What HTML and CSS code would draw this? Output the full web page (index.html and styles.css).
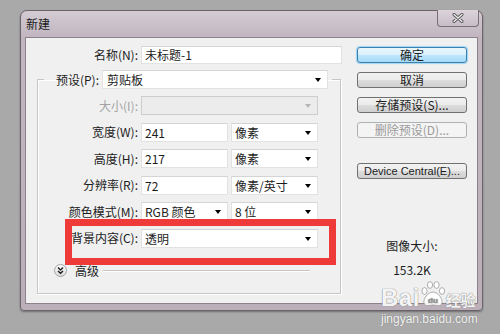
FILE: index.html
```html
<!DOCTYPE html>
<html lang="zh-CN">
<head>
    <meta charset="UTF-8">
    <meta name="viewport" content="width=device-width, initial-scale=1.0">
    <title>新建</title>
    <link rel="stylesheet" href="styles.css">
</head>
<body>
    <div class="dialog">
        <div class="titlebar">
            <span class="title">新建</span>
            <span class="close-btn">
                <svg width="12" height="10" viewBox="0 0 12 10">
                    <path d="M2 1.5 L10 8.5 M10 1.5 L2 8.5" stroke="#555" stroke-width="3" stroke-linecap="round"/>
                    <path d="M2 1.5 L10 8.5 M10 1.5 L2 8.5" stroke="#f4f4f4" stroke-width="1.2" stroke-linecap="round"/>
                </svg>
            </span>
        </div>

        <div class="client">
            <div class="main">
                <div class="row">
                    <label class="lbl lbl-name">名称(N):</label>
                    <div class="field w-name">未标题-1</div>
                </div>

                <fieldset class="group">
                    <legend class="preset">
                        <span class="preset-inner">
                            <span class="lbl-preset">预设(P):</span>
                            <span class="field select w-preset">剪贴板<i class="arrow"></i></span>
                        </span>
                    </legend>

                    <div class="rows">
                        <div class="row">
                            <label class="lbl disabled">大小(I):</label>
                            <div class="field select w-wide is-disabled"><i class="arrow"></i></div>
                        </div>
                        <div class="row">
                            <label class="lbl">宽度(W):</label>
                            <div class="field w-num">241</div>
                            <div class="field select w-unit">像素<i class="arrow"></i></div>
                        </div>
                        <div class="row">
                            <label class="lbl">高度(H):</label>
                            <div class="field w-num">217</div>
                            <div class="field select w-unit">像素<i class="arrow"></i></div>
                        </div>
                        <div class="row">
                            <label class="lbl">分辨率(R):</label>
                            <div class="field w-num">72</div>
                            <div class="field select w-unit">像素/英寸<i class="arrow"></i></div>
                        </div>
                        <div class="row">
                            <label class="lbl">颜色模式(M):</label>
                            <div class="field select w-num">RGB 颜色<i class="arrow"></i></div>
                            <div class="field select w-unit">8 位<i class="arrow"></i></div>
                        </div>
                        <div class="row">
                            <label class="lbl">背景内容(C):</label>
                            <div class="field select w-wide">透明<i class="arrow"></i></div>
                        </div>
                    </div>

                    <div class="advanced">
                        <span class="expander">
                            <svg width="13" height="13" viewBox="0 0 13 13">
                                <defs>
                                    <linearGradient id="exp" x1="0" y1="0" x2="0" y2="1">
                                        <stop offset="0" stop-color="#ffffff"/>
                                        <stop offset="1" stop-color="#d9d9d9"/>
                                    </linearGradient>
                                </defs>
                                <circle cx="6.5" cy="6.5" r="6" fill="url(#exp)" stroke="#a3a3a3"/>
                                <path d="M4 3.6 L6.5 6 L9 3.6 M4 6.9 L6.5 9.3 L9 6.9" fill="none" stroke="#222" stroke-width="1.4"/>
                            </svg>
                        </span>
                        <span>高级</span>
                        <span class="rule"></span>
                    </div>
                </fieldset>
            </div>

            <div class="side">
                <button class="btn btn-default">确定</button>
                <button class="btn">取消</button>
                <button class="btn">存储预设(S)...</button>
                <button class="btn" disabled>删除预设(D)...</button>
                <button class="btn btn-gap btn-latin">Device Central(E)...</button>
                <div class="image-size">
                    <div>图像大小:</div>
                    <div class="size-value">153.2K</div>
                </div>
            </div>

            <!-- annotation drawn over the screenshot -->
            <div class="highlight"></div>
        </div>
    </div>

    <div class="watermark">
        <div class="wm-logo">
            <span class="wm-bai">Bai</span>
            <svg class="wm-paw" width="26" height="28" viewBox="0 0 26 28">
                <g fill="rgba(255,255,255,0.9)" stroke="#9a9a9a" stroke-width="0.8">
                    <ellipse cx="4.5" cy="11" rx="2.6" ry="3.4"/>
                    <ellipse cx="10" cy="5" rx="2.6" ry="3.4"/>
                    <ellipse cx="16.5" cy="5" rx="2.6" ry="3.4"/>
                    <ellipse cx="22" cy="11" rx="2.6" ry="3.4"/>
                    <path d="M13 12 C18 12 23 19 22 23 C21 27 16 25 13 25 C10 25 5 27 4 23 C3 19 8 12 13 12 Z"/>
                </g>
                <text x="13" y="23" text-anchor="middle" class="wm-du">du</text>
            </svg>
            <span class="wm-jy">经验</span>
        </div>
        <div class="wm-url">jingyan.baidu.com</div>
    </div>
</body>
</html>
```

FILE: styles.css
```css
body {
    margin: 0;
    background-color: #a9a9a9;
    font-family: "Noto Sans CJK SC", "Liberation Sans", sans-serif;
    font-size: 12px;
    line-height: 16px;
    color: #1c1c1c;
    position: relative;
    height: 334px;
    overflow: hidden;
}
.dialog {
    margin: 10px 0 0 20px;
    width: 463px;
    height: 301px;
    box-sizing: border-box;
    border: 1px solid #6c626b;
    border-radius: 7px 7px 4px 4px;
    background: linear-gradient(#d4cbd3, #c1b6c0 26px, #bbb0ba);
    padding: 0 4px 6px;
    display: flex;
    flex-direction: column;
    box-shadow: 0 1px 2px rgba(0, 0, 0, 0.35);
}
.titlebar {
    height: 26px;
    display: flex;
    align-items: center;
}
.title {
    padding-left: 1px;
    font-size: 12px;
    color: #1a1a1a;
}
.close-btn {
    margin-left: auto;
    margin-right: -1px;
    margin-top: -1px;
    align-self: flex-start;
    width: 42px;
    height: 17px;
    box-sizing: border-box;
    border: 1px solid #7a6f79;
    border-top: none;
    border-radius: 0 0 4px 4px;
    background: linear-gradient(#dcd3db, #c8bdc7);
    display: flex;
    align-items: center;
    justify-content: center;
}
.client {
    flex: 1;
    position: relative;
    background-color: #f0f0f0;
    border: 1px solid #8d828c;
    display: flex;
    padding: 8px 0 0 11px;
}
.main {
    width: 305px;
}
.row {
    display: flex;
    align-items: center;
    gap: 3px;
}
.lbl {
    width: 100px;
    text-align: right;
    white-space: nowrap;
}
.lbl-name {
    width: 101px;
}
.disabled {
    color: #a3a3a3;
}
.field {
    position: relative;
    height: 19px;
    box-sizing: border-box;
    line-height: 17px;
    padding-left: 3px;
    background-color: #fff;
    border: 1px solid #e2e2e2;
    border-top-color: #d4d4d4;
    white-space: nowrap;
}
.w-name { width: 201px; height: 18px; line-height: 16px; }
.w-preset { width: 226px; padding-left: 4px; }
.w-wide { width: 177px; }
.w-num { width: 87px; }
.w-unit { width: 87px; }
.is-disabled {
    background-color: #ececec;
    border-color: #cdcdcd;
}
.arrow {
    position: absolute;
    right: 6px;
    top: 7px;
    width: 0;
    height: 0;
    border-left: 3.5px solid transparent;
    border-right: 3.5px solid transparent;
    border-top: 4px solid #000;
}
.is-disabled .arrow {
    border-top-color: #b5b5b5;
}
.group {
    margin: 6px 0 0;
    padding: 0 0 15px;
    width: 304px;
    box-sizing: border-box;
    border: 1px solid #c6c6c6;
    box-shadow: inset 1px 1px 0 #fff, 1px 1px 0 #fff;
}
.preset {
    margin-left: 6px;
    padding: 0 4px 0 10px;
}
.preset-inner {
    display: flex;
    align-items: center;
    gap: 3px;
}
.lbl-preset {
    width: 45px;
    text-align: right;
    white-space: nowrap;
}
.rows {
    padding-top: 7px;
    display: grid;
    row-gap: 7.5px;
}
.advanced {
    margin-top: 16px;
    height: 14px;
    display: flex;
    align-items: center;
    padding-left: 16px;
}
.expander {
    display: flex;
    margin-right: 8px;
}
.rule {
    flex: 1;
    margin: 1px 30px 0 4px;
    border-top: 1px solid #c6c6c6;
    border-bottom: 1px solid #fff;
}
.side {
    width: 110px;
    margin-left: 15px;
    padding-top: 1px;
    display: flex;
    flex-direction: column;
}
.btn {
    height: 16px;
    margin-bottom: 9px;
    padding: 0;
    font-family: inherit;
    font-size: 12px;
    line-height: 14px;
    color: #1c1c1c;
    border: 1px solid #707070;
    border-radius: 3px;
    background: linear-gradient(#f2f2f2, #ebebeb 50%, #dddddd 50%, #cfcfcf);
}
.btn-default {
    border-color: #3c7fb1;
    background: linear-gradient(#eaf6fd, #d9f0fc 50%, #bee6fd 50%, #a7d9f5);
    box-shadow: 0 0 1px 1px #9fd5f3;
}
.btn:disabled {
    border-color: #adb2b5;
    background: #f4f4f4;
    color: #9a9a9a;
}
.btn-gap {
    margin-top: 16px;
}
.btn-latin {
    font-family: "Liberation Sans", sans-serif;
    font-size: 11px;
}
.image-size {
    margin-top: 50px;
    text-align: center;
}
.size-value {
    margin-top: 8px;
}
.highlight {
    position: absolute;
    left: 39px;
    top: 181px;
    width: 271px;
    height: 46px;
    box-sizing: border-box;
    border: 7px solid #ef3a3a;
}
.watermark {
    position: absolute;
    left: 381px;
    top: 280px;
    color: rgba(255, 255, 255, 0.92);
    text-shadow: 0 0 1px #8a8a8a, 0 0 1px #8a8a8a;
}
.wm-logo {
    display: flex;
    align-items: flex-end;
    height: 30px;
}
.wm-bai {
    font-family: "Liberation Sans", sans-serif;
    font-size: 24px;
    line-height: 24px;
    font-weight: bold;
    letter-spacing: 0.5px;
}
.wm-paw {
    margin: 0 0 2px 0;
}
.wm-du {
    font-family: "Liberation Sans", sans-serif;
    font-size: 8px;
    font-weight: bold;
    fill: #9a9a9a;
}
.wm-jy {
    font-size: 15px;
    line-height: 20px;
    font-weight: bold;
}
.wm-url {
    margin-top: 2px;
    font-family: "Liberation Sans", sans-serif;
    font-size: 12px;
    line-height: 14px;
}
```
